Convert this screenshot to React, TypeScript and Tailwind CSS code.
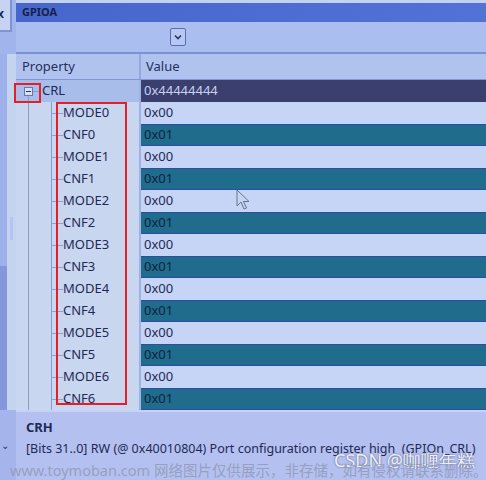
import React from "react";

const rows: [string, string][] = [
  ["MODE0", "0x00"],
  ["CNF0", "0x01"],
  ["MODE1", "0x00"],
  ["CNF1", "0x01"],
  ["MODE2", "0x00"],
  ["CNF2", "0x01"],
  ["MODE3", "0x00"],
  ["CNF3", "0x01"],
  ["MODE4", "0x00"],
  ["CNF4", "0x01"],
  ["MODE5", "0x00"],
  ["CNF5", "0x01"],
  ["MODE6", "0x00"],
  ["CNF6", "0x01"],
];

const font = { fontFamily: '"Noto Sans", "Open Sans", sans-serif' };

function ChildRow({ name, value }: { name: string; value: string }) {
  const teal = value === "0x01";
  return (
    <div className="flex h-[22px]">
      <div className="flex w-[123px] items-center bg-[#c8d6f0]">
        <div className="w-[12px]" />
        <div className="h-full w-[23px] border-l border-[#8e9ed0]" />
        <div className="flex h-full w-[12px] items-center border-l border-[#8e9ed0]">
          <div className="h-px w-full bg-[#8e9ed0]" />
        </div>
        <span className="text-[13px] text-[#1e2a55]">{name}</span>
      </div>
      <div className="w-[2px] bg-[#9fb2e4]" />
      <div
        className={
          teal
            ? "flex flex-1 items-center border-y border-[#2c4ca6] bg-[#1f6c8c] pl-[3px] text-[13px] text-[#10223f]"
            : "flex flex-1 items-center bg-[#c6d4f6] pl-[3px] text-[13px] text-[#1e2a55]"
        }
      >
        {value}
      </div>
    </div>
  );
}

export default function App() {
  return (
    <div
      className="relative flex h-[480px] w-[486px] overflow-hidden bg-[#b0c2f0]"
      style={font}
    >
      {/* left strip */}
      <div className="flex w-[16px] shrink-0 flex-col bg-[#a2b4ec]">
        <div className="flex h-[32px] w-[12px] items-start border-r-2 border-b-2 border-[#7f92d6] bg-[#c6d3f2] pt-[8px]">
          <span className="-ml-[3px] text-[12px] font-bold leading-none text-[#1e2a55]">x</span>
        </div>
        <div className="h-[22px]" />
        <div className="flex flex-1">
          <div className="flex w-[7px] flex-col">
            <div className="h-[212px] bg-[#9cb0ea]" />
            <div className="flex-1 bg-[#8496dc]" />
          </div>
          <div className="flex-1 bg-[#c4d4ee] pl-[3px] pt-[163px]">
            <div className="h-[23px] w-[3px] bg-[#b2c6f0]" />
          </div>
        </div>
        <div className="flex h-[70px] items-center bg-[#a6b4ec] pl-[1px]">
          <span className="text-[10px] text-[#2a3560]">⌄</span>
        </div>
      </div>

      {/* main panel */}
      <div className="flex flex-1 flex-col">
        <div className="h-[3px] bg-[#c4d0f4]" />
        <div className="flex h-[19px] items-center bg-gradient-to-r from-[#4666cc] to-[#5272d6] pl-[6px]">
          <span className="text-[11px] font-bold text-[#16204a]">GPIOA</span>
        </div>
        <div className="flex h-[30px] items-center bg-[#abbef0] pl-[154px]">
          <div className="flex h-[18px] w-[16px] items-center justify-center rounded-[2px] border border-[#5d6cb0] bg-[#b8c8f4]">
            <svg width="10" height="10" viewBox="0 0 10 10">
              <path d="M2 3.5 L5 6.5 L8 3.5" fill="none" stroke="#2a3566" strokeWidth="1.6" />
            </svg>
          </div>
        </div>
        <div className="h-[2px] bg-[#7c90d2]" />
        <div className="flex h-[26px] border-b border-[#8296d6] bg-[#b0c3ef]">
          <div className="flex w-[123px] items-center pl-[6px] text-[13px] text-[#24305a]">Property</div>
          <div className="w-[2px] bg-[#94a8e0]" />
          <div className="flex flex-1 items-center pl-[5px] text-[13px] text-[#24305a]">Value</div>
        </div>

        {/* CRL root row */}
        <div className="flex h-[22px]">
          <div className="flex w-[123px] items-center bg-[#a9bdea]">
            <div className="w-[8px]" />
            <div className="flex h-full w-[9px] flex-col items-center">
              <div className="flex-1" />
              <div className="flex h-[9px] w-[9px] items-center justify-center border border-[#6878b0] bg-[#d8e0f6]">
                <div className="h-px w-[5px] bg-[#2a3566]" />
              </div>
              <div className="w-px flex-1 bg-[#8e9ed0]" />
            </div>
            <div className="h-px w-[7px] bg-[#8e9ed0]" />
            <span className="ml-[2px] text-[13px] text-[#1e2a55]">CRL</span>
          </div>
          <div className="w-[2px] bg-[#9fb2e4]" />
          <div className="flex flex-1 items-center bg-[#3a3f6e] pl-[3px] text-[13px] text-[#c8d0f2]">
            0x44444444
          </div>
        </div>

        {rows.map(([n, v]) => (
          <ChildRow key={n} name={n} value={v} />
        ))}

        {/* description */}
        <div className="flex flex-1 flex-col border-t-2 border-[#c8d2f6] bg-[#b4c0f0] pl-[10px] pt-[6px]">
          <span className="text-[13px] font-bold text-[#1e2a55]">CRH</span>
          <span className="mt-[2px] text-[12.5px] text-[#1e2a55]">
            [Bits 31..0] RW (@ 0x40010804) Port configuration register high&nbsp; (GPIOn_CRL)
          </span>
        </div>
      </div>

      {/* red annotation boxes */}
      <div className="absolute left-[14px] top-[83px] h-[20px] w-[27px] border-2 border-[#e3202a]" />
      <div className="absolute left-[56px] top-[102px] h-[303px] w-[71px] border-2 border-[#e3202a]" />

      {/* mouse cursor */}
      <svg className="absolute left-[236px] top-[189px]" width="14" height="22" viewBox="0 0 14 22">
        <path
          d="M1 1 L1 17 L5 13 L8 20 L10.5 19 L7.5 12.5 L13 12.5 Z"
          fill="#c8d4f4"
          stroke="#6a7290"
          strokeWidth="1"
        />
      </svg>

      {/* watermarks */}
      <div className="absolute left-[334px] top-[451px] text-[18px] leading-none text-[#eef0fa] [text-shadow:0_0_2px_#4a5070]">
        CSDN @咖喱年糕
      </div>
      <div
        className="absolute left-[10px] top-[463px] whitespace-nowrap text-[14.5px] leading-none text-[#8f96b4]/80"
        style={{ fontFamily: '"Noto Sans", "Noto Sans CJK SC", sans-serif' }}
      >
        www.toymoban.com 网络图片仅供展示，非存储，如有侵权请联系删除。
      </div>
    </div>
  );
}
